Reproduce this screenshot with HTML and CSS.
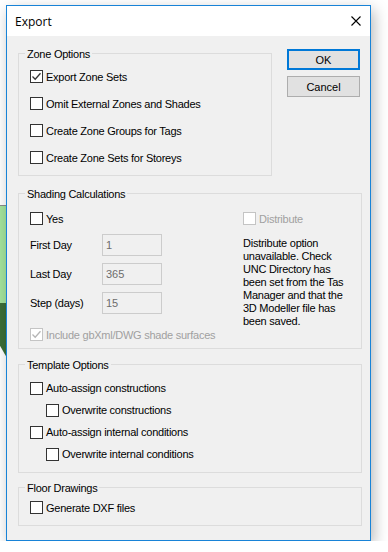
FILE: index.html
```html
<!DOCTYPE html>
<html lang="en">
<head>
	<meta charset="UTF-8">
	<meta name="viewport" content="width=device-width, initial-scale=1.0">
	<title>Export</title>
	<link rel="stylesheet" href="styles.css">
</head>
<body>
	<div class="desktop-shape"></div>
	<div class="dialog">
		<div class="titlebar">
			<span class="title">Export</span>
			<span class="close">
				<svg width="10" height="10" viewBox="0 0 10 10"><path d="M0.5 0.5L9.5 9.5M9.5 0.5L0.5 9.5" stroke="#000" stroke-width="1.1" fill="none"/></svg>
			</span>
		</div>
		<div class="content">
			<div class="top-row">
				<div class="group zone">
					<div class="group-title">Zone Options</div>
					<div class="rows">
						<label class="check"><span class="box"><svg width="11" height="11" viewBox="0 0 11 11"><path d="M1.5 5.5L4.2 8.2L9.5 2.3" stroke="#333" stroke-width="1.3" fill="none"/></svg></span>Export Zone Sets</label>
						<label class="check"><span class="box"></span>Omit External Zones and Shades</label>
						<label class="check"><span class="box"></span>Create Zone Groups for Tags</label>
						<label class="check"><span class="box"></span>Create Zone Sets for Storeys</label>
					</div>
				</div>
				<div class="buttons">
					<button class="btn default">OK</button>
					<button class="btn">Cancel</button>
				</div>
			</div>

			<div class="group shading">
				<div class="group-title">Shading Calculations</div>
				<div class="shading-cols">
					<div class="shading-left">
						<label class="check yes"><span class="box"></span>Yes</label>
						<div class="field first"><span class="field-label">First Day</span><input type="text" value="1" disabled></div>
						<div class="field"><span class="field-label">Last Day</span><input type="text" value="365" disabled></div>
						<div class="field"><span class="field-label">Step (days)</span><input type="text" value="15" disabled></div>
						<label class="check disabled include"><span class="box"><svg width="11" height="11" viewBox="0 0 11 11"><path d="M1.5 5.5L4.2 8.2L9.5 2.3" stroke="#b5b5b5" stroke-width="1.3" fill="none"/></svg></span>Include gbXml/DWG shade surfaces</label>
					</div>
					<div class="shading-right">
						<label class="check disabled distribute"><span class="box"></span>Distribute</label>
						<p class="note">Distribute option<br>unavailable. Check<br>UNC Directory has<br>been set from the Tas<br>Manager and that the<br>3D Modeller file has<br>been saved.</p>
					</div>
				</div>
			</div>

			<div class="group template">
				<div class="group-title">Template Options</div>
				<div class="rows">
					<label class="check"><span class="box"></span>Auto-assign constructions</label>
					<label class="check sub"><span class="box"></span>Overwrite constructions</label>
					<label class="check"><span class="box"></span>Auto-assign internal conditions</label>
					<label class="check sub"><span class="box"></span>Overwrite internal conditions</label>
				</div>
			</div>

			<div class="group floor">
				<div class="group-title">Floor Drawings</div>
				<div class="rows">
					<label class="check"><span class="box"></span>Generate DXF files</label>
				</div>
			</div>
		</div>
	</div>
</body>
</html>
```

FILE: styles.css
```css
* {
	box-sizing: border-box;
}
body {
	margin: 0;
	background: #fff;
	font-family: "Liberation Sans", Arial, sans-serif;
	font-size: 11px;
	letter-spacing: -0.25px;
	color: #000;
}
.desktop-shape {
	position: absolute;
	left: 0;
	top: 205px;
	width: 7px;
	height: 153px;
	border-top: 1px solid #8a8a8a;
	background: linear-gradient(#a4e49c 0, #a4e49c 64%, #3b6e38 64%, #3b6e38 100%);
	clip-path: polygon(0 0, 100% 0, 100% 100%, 0 92%);
}
.dialog {
	position: relative;
	margin: 5px 0 0 6px;
	width: 365px;
	height: 536px;
	border: 1px solid #1883d7;
	background: #f0f0f0;
	box-shadow: 3px 5px 14px rgba(0, 0, 0, 0.28);
}
.titlebar {
	height: 30px;
	background: #fff;
	display: flex;
	align-items: center;
	justify-content: space-between;
	padding: 0 9px 0 8px;
}
.title {
	font-family: "Open Sans", "Noto Sans", sans-serif;
	font-size: 12px;
	letter-spacing: 0;
}
.close svg {
	display: block;
}
.content {
	padding: 13px 8px 0 11px;
}
.top-row {
	display: flex;
	gap: 15px;
}
.buttons {
	display: flex;
	flex-direction: column;
	gap: 6px;
}
.btn {
	width: 73px;
	height: 21px;
	padding: 0;
	background: #e1e1e1;
	border: 1px solid #adadad;
	font: inherit;
	color: #000;
}
.btn.default {
	border: 2px solid #0078d7;
}
.group {
	border: 1px solid #dcdcdc;
	padding: 0 11px;
}
.group-title {
	width: fit-content;
	margin: -6px 0 0 -5px;
	padding: 0 2px;
	line-height: 13px;
	background: #f0f0f0;
}
.check {
	display: flex;
	align-items: center;
	gap: 3px;
	white-space: nowrap;
}
.box {
	flex: none;
	width: 13px;
	height: 13px;
	border: 1px solid #333;
	background: #fff;
}
.box svg {
	display: block;
}
.check.disabled {
	color: #a0a0a0;
}
.check.disabled .box {
	border-color: #c4c4c4;
}

/* zone options */
.zone {
	width: 254px;
	height: 123px;
	margin-top: 4px;
}
.zone .rows {
	margin-top: 2px;
}
.zone .check {
	height: 27px;
}

/* shading */
.shading {
	height: 156px;
	margin-top: 17px;
}
.shading-cols {
	display: flex;
}
.shading-left {
	width: 213px;
}
.check.yes, .check.distribute {
	height: 13px;
	margin-top: 11px;
}
.field {
	display: flex;
	align-items: center;
	margin-top: 7px;
}
.field.first {
	margin-top: 9px;
}
.field-label {
	width: 72px;
}
.field input {
	width: 60px;
	height: 22px;
	padding: 0 3px;
	border: 1px solid #cccccc;
	background: #f0f0f0;
	color: #6d6d6d;
	font: inherit;
}
.check.include {
	height: 13px;
	margin-top: 14px;
}
.note {
	margin: 12px 0 0;
	line-height: 13px;
}

/* template options */
.template {
	height: 109px;
	margin-top: 15px;
}
.template .rows {
	margin-top: 5px;
}
.template .check {
	height: 22px;
}
.check.sub {
	padding-left: 16px;
}

/* floor drawings */
.floor {
	height: 39px;
	margin-top: 14px;
}
.floor .rows {
	margin-top: 6px;
}
.floor .check {
	height: 13px;
}
```
